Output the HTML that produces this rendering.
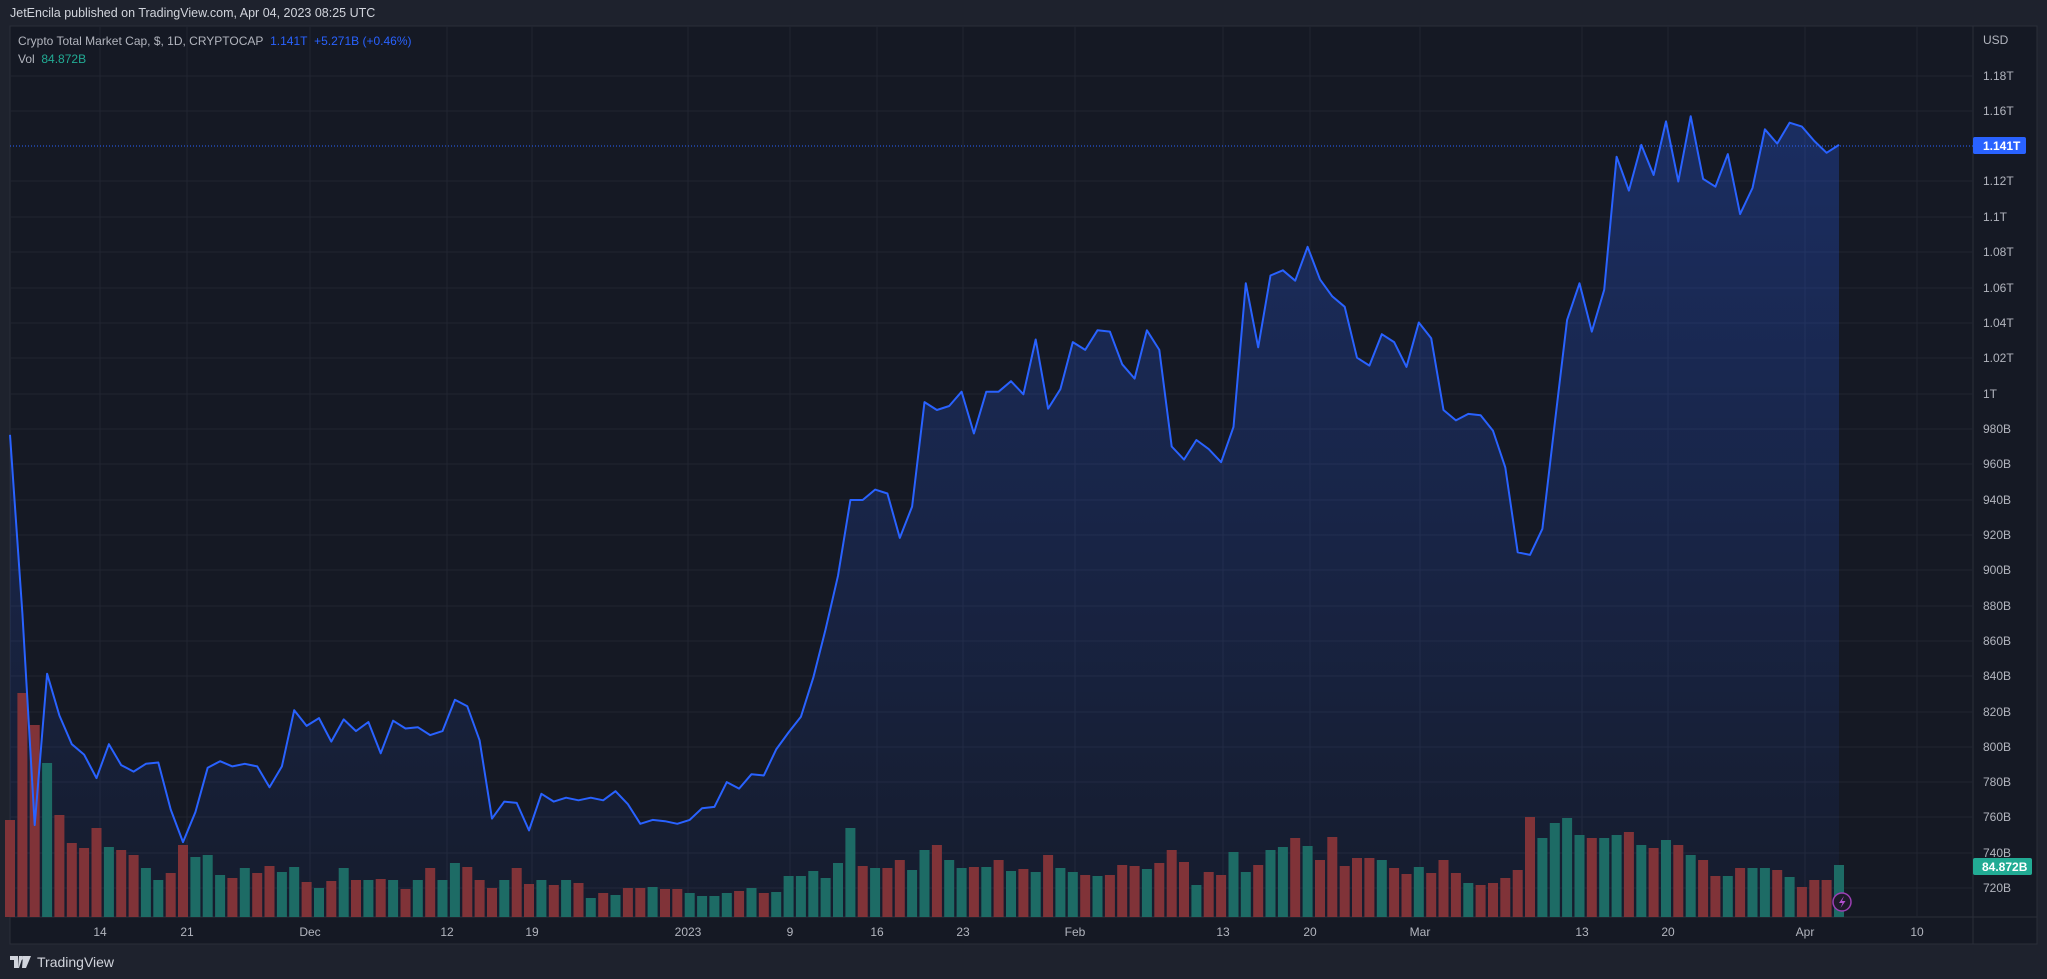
<!DOCTYPE html>
<html><head><meta charset="utf-8"><style>
body{margin:0;width:2047px;height:979px;background:#1e222d;overflow:hidden;font-family:"Liberation Sans",sans-serif;position:relative}
.t{position:absolute;white-space:nowrap;font-size:12px}
</style></head><body>
<div class="t" style="left:10px;top:6px;color:#d1d4dc;font-size:12.5px">JetEncila published on TradingView.com, Apr 04, 2023 08:25 UTC</div>
<svg id="s" width="2047" height="979" style="position:absolute;left:0;top:0"></svg>
<div class="t" style="left:18px;top:34px;color:#b2b5be">Crypto Total Market Cap, $, 1D, CRYPTOCAP&nbsp; <span style="color:#2962ff">1.141T&nbsp; +5.271B (+0.46%)</span></div>
<div class="t" style="left:18px;top:52px;color:#b2b5be">Vol&nbsp; <span style="color:#22ab94">84.872B</span></div>
<div class="t" style="left:10px;top:954px;color:#d1d4dc;font-size:14px;display:flex;align-items:center"><svg width="22" height="12" viewBox="0 0 22 12" style="margin-right:5px"><path d="M0 0h8v12h-4v-8h-4z M9 0h4l-4 12h-1z M13 0h8l-5 12h-4z" fill="#d1d4dc"/><circle cx="11" cy="2" r="2" fill="#d1d4dc"/></svg>TradingView</div>
<script>
const ys0=[333,470,632,516,548,570,578,596,570,586,591,585,584,620,645,622,588,583,587,585,587,603,587,544,556,550,568,551,560,553,577,552,558,557,563,560,536,541,567,627,614,615,636,608,614,611,613,611,613,606,616,631,628,629,631,628,619,618,599,604,593,594,574,561,549,519,482,441,383,383,375,378,412,388,308,314,311,300,332,300,300,292,302,260,313,298,262,268,253,254,279,290,253,268,342,352,337,344,354,327,217,266,211,207,215,189,214,227,235,274,280,256,262,281,247,259,314,322,317,318,330,358,423,425,405,324,245,217,254,222,120,146,111,134,93,139,89,137,143,118,164,144,99,110,94,97,108,117,111];
const ys=ys0.map(y=>+(y*1.3056).toFixed(1));
const vt=[820,693,725,763,815,843,848,828,847,850,855,868,880,873,845,857,855,875,878,868,873,866,872,867,882,888,881,868,880,880,879,880,889,880,868,880,863,867,880,888,880,868,884,880,885,880,883,898,893,895,888,888,887,889,889,893,896,896,893,891,888,893,892,876,876,871,878,863,828,866,868,868,860,870,850,845,860,868,867,867,860,871,869,872,855,868,872,875,876,875,865,866,869,863,850,862,885,872,875,852,872,865,850,847,838,846,860,837,866,858,858,860,868,874,867,873,860,873,883,885,883,878,870,817,838,823,818,835,838,838,835,832,845,848,840,845,855,860,876,876,868,868,868,870,877,887,880,880,865];
const n=ys.length,x0=10,x1=1839,st=(x1-x0)/(n-1);
let h='<defs><linearGradient id="g" x1="0" y1="0" x2="0" y2="1"><stop offset="0" stop-color="#2962ff" stop-opacity="0.28"/><stop offset="1" stop-color="#2962ff" stop-opacity="0.04"/></linearGradient></defs>';
h+='<rect x="10" y="26" width="2027" height="918" fill="#151924" stroke="#2a2e39"/>';
h+='<line x1="1973" y1="26" x2="1973" y2="944" stroke="#2a2e39"/><line x1="10" y1="917" x2="2037" y2="917" stroke="#2a2e39"/>';
const pl=[["USD",40],["1.18T",76],["1.16T",111],["1.12T",181],["1.1T",217],["1.08T",252],["1.06T",288],["1.04T",323],["1.02T",358],["1T",394],["980B",429],["960B",464],["940B",500],["920B",535],["900B",570],["880B",606],["860B",641],["840B",676],["820B",712],["800B",747],["780B",782],["760B",817],["740B",853],["720B",888]];
pl.forEach(p=>{if(p[0]!="USD")h+=`<line x1="10" y1="${p[1]}" x2="1973" y2="${p[1]}" stroke="#212531"/>`;h+=`<text x="1983" y="${p[1]+4}" fill="#b2b5be" font-size="12" font-family="Liberation Sans">${p[0]}</text>`;});
const tl=[["14",100],["21",187],["Dec",310],["12",447],["19",532],["2023",688],["9",790],["16",877],["23",963],["Feb",1075],["13",1223],["20",1310],["Mar",1420],["13",1582],["20",1668],["Apr",1805],["10",1917]];
tl.forEach(t=>{h+=`<line x1="${t[1]}" y1="26" x2="${t[1]}" y2="917" stroke="#212531"/><text x="${t[1]}" y="936" fill="#b2b5be" font-size="12" text-anchor="middle" font-family="Liberation Sans">${t[0]}</text>`;});
let pts=ys.map((y,i)=>(x0+i*st).toFixed(1)+','+y).join(' ');
h+=`<polygon points="${x0},917 ${pts} ${x1},917" fill="url(#g)"/>`;
for(let i=0;i<n;i++){const x=x0+i*st;const up=i==0?false:ys[i]<ys[i-1];h+=`<rect x="${(x-5).toFixed(1)}" y="${vt[i]}" width="10" height="${917-vt[i]}" fill="${up?'#1d6b65':'#803338'}"/>`;}
h+=`<line x1="10" y1="146" x2="1973" y2="146" stroke="#2962ff" stroke-dasharray="1,2"/>`;
h+=`<polyline points="${pts}" fill="none" stroke="#2962ff" stroke-width="2" stroke-linejoin="round"/>`;
h+=`<rect x="1973" y="137" width="53" height="17" rx="2" fill="#2962ff"/><text x="1983" y="150" fill="#fff" font-size="12" font-weight="bold" font-family="Liberation Sans">1.141T</text>`;
h+=`<rect x="1973" y="858" width="59" height="17" rx="2" fill="#22ab94"/><text x="1982" y="871" fill="#fff" font-size="12" font-weight="bold" font-family="Liberation Sans">84.872B</text>`;
h+=`<circle cx="1842" cy="902" r="9" fill="#1e1a2a" stroke="#9c3fb4" stroke-width="1.5"/><path d="M1844 896l-5 7h3.5l-2 5 5-7h-3.5z" fill="#b24fcf"/>`;
document.getElementById('s').innerHTML=h;
</script>
</body></html>
